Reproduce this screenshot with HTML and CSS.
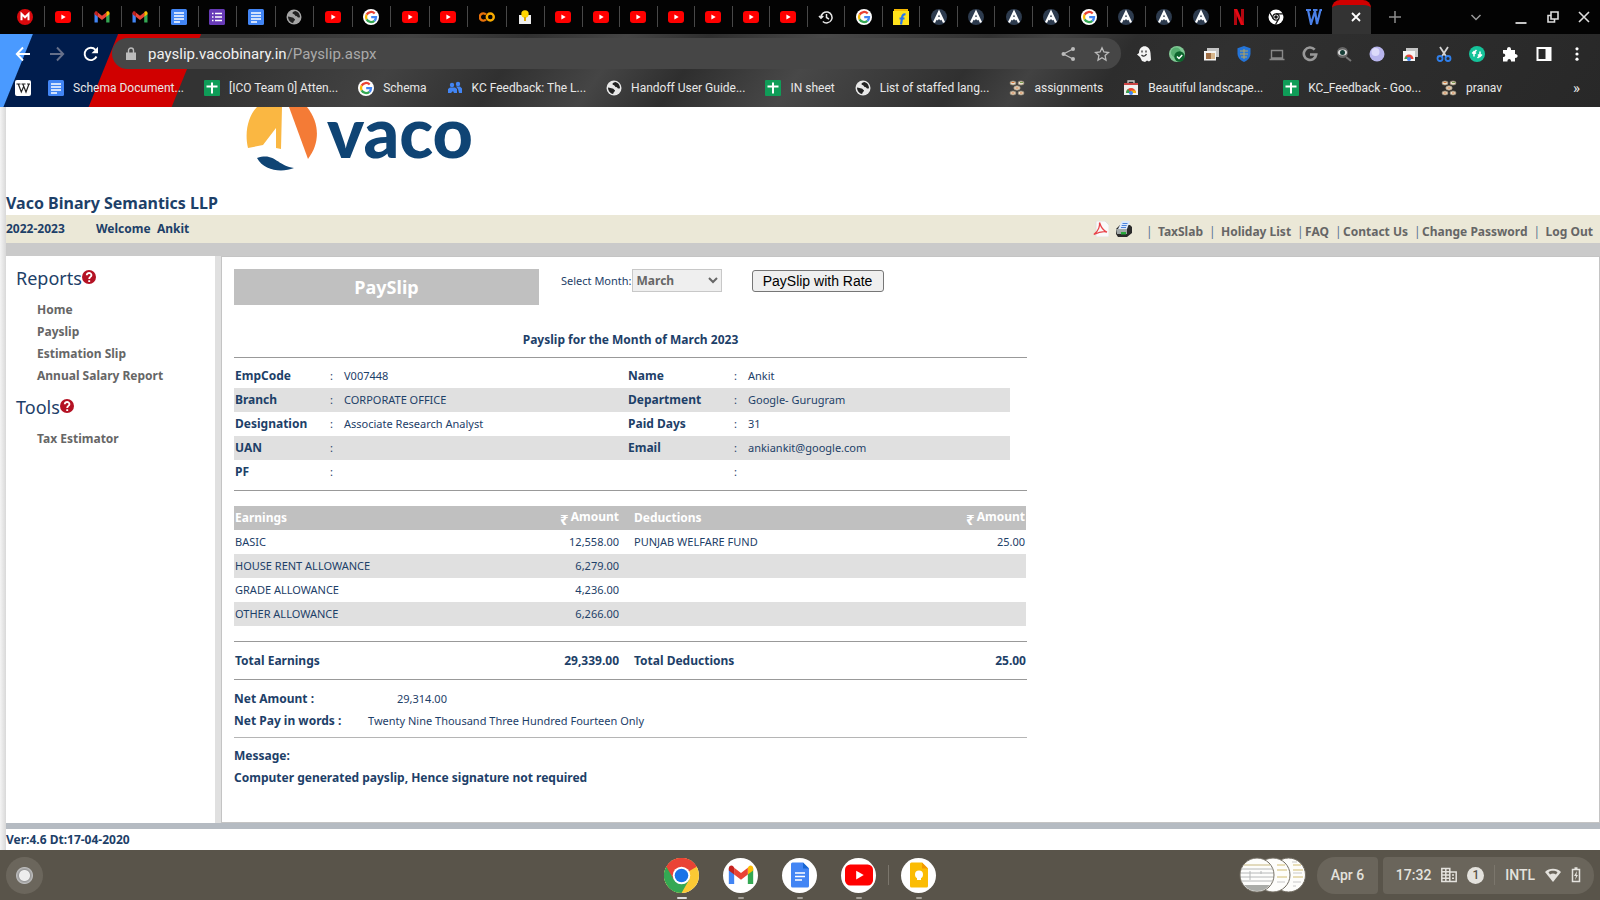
FILE: index.html
```html
<!DOCTYPE html>
<html lang="en">

<head>
    <meta charset="UTF-8">
    <meta name="viewport" content="width=device-width, initial-scale=1.0">
    <title>PaySlip</title>
    <link rel="stylesheet" href="styles.css">
</head>

<body>
    <!-- Shared icons -->
    <svg class="sprite" aria-hidden="true">
        <symbol id="mega" viewBox="0 0 16 16"><circle cx="8" cy="8" r="8" fill="#d9090d"/><path d="M4.500 11.300V4.800L8 8.300l3.500-3.500v6.500" fill="none" stroke="#fff" stroke-width="2"/></symbol>
        <symbol id="youtube" viewBox="0 0 16 16"><rect y="2" width="16" height="12" rx="3" fill="#f00"/><path d="M6.400 5.500v5L10.700 8z" fill="#fff"/></symbol>
        <symbol id="gmail" viewBox="0 0 16 16"><path d="M.5 4v9.500h3.300V6.500z" fill="#4285f4"/><path d="M15.500 4v9.500h-3.300V6.500z" fill="#34a853"/><path d="M12.200 3.500v4.200l3.300-2.500V3.800c0-1.500-1.700-2-2.700-1.200z" fill="#fbbc04"/><path d="M3.800 7.700V3.500L8 6.700l4.200-3.200v4.200L8 10.900z" fill="#ea4335"/><path d="M.5 5.200V3.800c0-1.500 1.700-2 2.700-1.200l.6.9v4.200z" fill="#c5221f"/></symbol>
        <symbol id="docs" viewBox="0 0 16 16"><rect width="16" height="16" rx="1.500" fill="#4285f4"/><path d="M3 4h10M3 7h10M3 10h10M3 13h6" stroke="#fff" stroke-width="1.500"/></symbol>
        <symbol id="forms" viewBox="0 0 16 16"><rect width="16" height="16" rx="1.500" fill="#673ab7"/><path d="M3 4.500h1.500M6 4.500h7M3 8h1.500M6 8h7M3 11.500h1.500M6 11.500h7" stroke="#fff" stroke-width="1.600"/></symbol>
        <symbol id="sheets" viewBox="0 0 16 16"><rect width="16" height="16" rx="1" fill="#0f9d58"/><path d="M8 2.500v11M2.500 6.500h11" stroke="#fff" stroke-width="2"/></symbol>
        <symbol id="globe" viewBox="0 0 16 16"><circle cx="8" cy="8" r="7.500" fill="currentColor"/><path d="M2 7.500c2 0 3 1 4.500 1s1 1.500 2.500 1.700c0 1.800-1.500 1.300-1.800 3.800C4 13.500 2 10.500 2 7.500M9 2c-1 1-2.500.6-2.500 2s2 .8 2.500 2.200 2 .6 2.300 1.600 1.600.6 2.700.4C14 5 12 2.500 9 2" fill="#222"/></symbol>
        <symbol id="google" viewBox="0 0 16 16"><circle cx="8" cy="8" r="8" fill="#fff"/><g fill="none" stroke-width="2.300"><path d="M3.600 5.600A5.100 5.100 0 0 1 11.700 4.500" stroke="#ea4335"/><path d="M3.600 5.600a5.100 5.100 0 0 0 0 4.800" stroke="#fbbc05"/><path d="M3.600 10.400a5.100 5.100 0 0 0 7.800 1.400" stroke="#34a853"/><path d="M11.400 11.800A5 5 0 0 0 13 8.200H8.200" stroke="#4285f4"/></g></symbol>
        <symbol id="colab" viewBox="0 0 16 16"><g fill="none" stroke-width="2.400"><path d="M7 5.500a3.600 3.600 0 1 0 0 5" stroke="#e8710a"/><circle cx="11.300" cy="8" r="3.500" stroke="#f9ab00"/></g></symbol>
        <symbol id="bulb" viewBox="0 0 16 16"><path d="M2 15V6h12v9z" fill="#eee"/><circle cx="8" cy="5" r="3.700" fill="#ffd500"/><path d="M7 8h2v4H7z" fill="#e0a800"/></symbol>
        <symbol id="history" viewBox="0 0 16 16"><path d="M3 8.500a5.500 5.500 0 1 1 1.800 4M1 7l2 2.200L5.300 7M8.500 5v3.500l2.500 1.600" fill="none" stroke="#e8e8e8" stroke-width="1.500"/></symbol>
        <symbol id="flipkart" viewBox="0 0 16 16"><path d="M1 0h14v3H1z" fill="#f5b800"/><path d="M0 2h16v14H0z" fill="#ffe11b"/><path d="M12.500 5.500c-2-.5-3 .5-3.300 2.500L8 15.500M6.500 9.500h5" fill="none" stroke="#2874f0" stroke-width="2.200"/></symbol>
        <symbol id="alpha" viewBox="0 0 16 16"><circle cx="8" cy="8" r="8" fill="#2d3b4e"/><path d="M3 13.500 8 3l5 10.500M5.500 10.500 8 8.800l2.500 1.700" fill="none" stroke="#fff" stroke-width="2.200"/></symbol>
        <symbol id="netflix" viewBox="0 0 16 16"><path d="M4.500 0v16M11.500 0v16" stroke="#b20710" stroke-width="3"/><path d="M3 0h3.200L13 16H9.800z" fill="#e50914"/></symbol>
        <symbol id="mono-chrome" viewBox="0 0 16 16"><circle cx="8" cy="8" r="7.500" fill="#fff"/><g fill="none" stroke="#111" stroke-width="1.200"><circle cx="8" cy="8" r="3.200"/><path d="M8 4.800h7M5.200 9.600 1.700 3.600M10.800 9.600 7.500 15.500"/></g><circle cx="8" cy="8" r="1.800" fill="#111"/></symbol>
        <symbol id="word" viewBox="0 0 16 16"><path d="M0 1h5M7 1h4.500M2 1l3 14L9 2l2 13 3.500-14H16" fill="none" stroke="#4a80e8" stroke-width="2.200"/></symbol>
        <symbol id="wiki" viewBox="0 0 16 16"><rect width="16" height="16" rx="2" fill="#fff"/><path d="M1.500 4h4M6.500 4h4M12 4h3M3.300 4l3 8L8.700 6.500M7.800 4l3.200 8 3-8" fill="none" stroke="#222" stroke-width="1.200"/></symbol>
        <symbol id="people" viewBox="0 0 16 16"><g fill="#4285f4"><circle cx="5" cy="5" r="2.200"/><circle cx="11" cy="4" r="2.200"/><path d="M1 13V9l2-1.500h5L10 9v4H7l-1-2-2 2zM9 6.500h4l2 2V13h-3l-1-4z"/></g></symbol>
        <symbol id="swarm" viewBox="0 0 16 16"><g fill="#e7dfcf" stroke="#96866e" stroke-width=".8"><ellipse cx="4" cy="3" rx="3" ry="2"/><ellipse cx="12" cy="3" rx="3" ry="2"/><ellipse cx="8" cy="8" rx="3.200" ry="2.200"/><ellipse cx="4" cy="13" rx="3" ry="2"/><ellipse cx="12" cy="13" rx="3" ry="2"/></g><path d="M2.500 2.500h3M6.500 8h3M2.500 13h3M11 13h2.500" stroke="#d87838"/><path d="M11 2.500h3" stroke="#7a9b4d"/></symbol>
        <symbol id="store" viewBox="0 0 16 16"><path d="M5 3V1h6v2" fill="none" stroke="#ccc" stroke-width="1.300"/><path d="M1 3h14v12H1z" fill="#f1f1f1"/><path d="M1 3h14v2H1z" fill="#c44"/><path d="M3 13a5 5 0 0 1 10 0z" fill="#ea4335"/><path d="M3 13a5 5 0 0 1 2-4l2.500 4z" fill="#34a853"/><path d="M8 13h5a5 5 0 0 0-.8-2.500H8z" fill="#fbbc05"/><circle cx="8" cy="13" r="2" fill="#4285f4"/></symbol>
        <symbol id="chrome" viewBox="0 0 36 36"><circle cx="18" cy="18" r="18" fill="#fbc934"/><path d="M18 18 2.400 9A18 18 0 0 1 33.600 9z" fill="#ea4335"/><path d="M18 18 2.400 9a18 18 0 0 0 15.600 27l8-14z" fill="#34a853"/><path d="M18 9h15.600A18 18 0 0 0 2.400 9l8 13.500z" fill="#ea4335"/><circle cx="18" cy="18" r="9" fill="#fff"/><circle cx="18" cy="18" r="7" fill="#1a73e8"/></symbol>
        <symbol id="help" viewBox="0 0 14 14"><circle cx="7" cy="7" r="7" fill="#b41224"/><path d="M4.800 5.200c0-3 4.700-2.800 4.600 0C9.400 7 7.200 6.800 7.200 9M7.200 10.200v1.800" fill="none" stroke="#fff" stroke-width="1.900"/></symbol>
    </svg>

    <header class="browser">
        <div class="tab-strip">
            <div class="tabs tabs-left">
                <button class="tab" aria-label="Mega"><svg><use href="#mega"/></svg></button>
                <button class="tab" aria-label="YouTube"><svg><use href="#youtube"/></svg></button>
                <button class="tab" aria-label="Gmail"><svg><use href="#gmail"/></svg></button>
                <button class="tab" aria-label="Gmail"><svg><use href="#gmail"/></svg></button>
                <button class="tab" aria-label="Docs"><svg><use href="#docs"/></svg></button>
                <button class="tab" aria-label="Forms"><svg><use href="#forms"/></svg></button>
                <button class="tab" aria-label="Docs"><svg><use href="#docs"/></svg></button>
                <button class="tab" aria-label="Site"><svg class="dim"><use href="#globe"/></svg></button>
                <button class="tab" aria-label="YouTube"><svg><use href="#youtube"/></svg></button>
                <button class="tab" aria-label="Google"><svg><use href="#google"/></svg></button>
                <button class="tab" aria-label="YouTube"><svg><use href="#youtube"/></svg></button>
                <button class="tab" aria-label="YouTube"><svg><use href="#youtube"/></svg></button>
                <button class="tab" aria-label="Colab"><svg><use href="#colab"/></svg></button>
                <button class="tab" aria-label="Ideas"><svg><use href="#bulb"/></svg></button>
            </div>
            <div class="tabs tabs-right">
                <button class="tab" aria-label="YouTube"><svg><use href="#youtube"/></svg></button>
                <button class="tab" aria-label="YouTube"><svg><use href="#youtube"/></svg></button>
                <button class="tab" aria-label="YouTube"><svg><use href="#youtube"/></svg></button>
                <button class="tab" aria-label="YouTube"><svg><use href="#youtube"/></svg></button>
                <button class="tab" aria-label="YouTube"><svg><use href="#youtube"/></svg></button>
                <button class="tab" aria-label="YouTube"><svg><use href="#youtube"/></svg></button>
                <button class="tab" aria-label="YouTube"><svg><use href="#youtube"/></svg></button>
                <button class="tab" aria-label="History"><svg><use href="#history"/></svg></button>
                <button class="tab" aria-label="Google"><svg><use href="#google"/></svg></button>
                <button class="tab" aria-label="Flipkart"><svg><use href="#flipkart"/></svg></button>
                <button class="tab" aria-label="Alpha"><svg><use href="#alpha"/></svg></button>
                <button class="tab" aria-label="Alpha"><svg><use href="#alpha"/></svg></button>
                <button class="tab" aria-label="Alpha"><svg><use href="#alpha"/></svg></button>
                <button class="tab" aria-label="Alpha"><svg><use href="#alpha"/></svg></button>
                <button class="tab" aria-label="Google"><svg><use href="#google"/></svg></button>
                <button class="tab" aria-label="Alpha"><svg><use href="#alpha"/></svg></button>
                <button class="tab" aria-label="Alpha"><svg><use href="#alpha"/></svg></button>
                <button class="tab" aria-label="Alpha"><svg><use href="#alpha"/></svg></button>
                <button class="tab" aria-label="Netflix"><svg><use href="#netflix"/></svg></button>
                <button class="tab" aria-label="Chrome"><svg><use href="#mono-chrome"/></svg></button>
                <button class="tab" aria-label="Word"><svg><use href="#word"/></svg></button>
            </div>
            <button class="tab-active" aria-label="Close tab"><svg viewBox="0 0 16 16"><path d="M4 4l8 8M12 4l-8 8" stroke="#fff" stroke-width="1.800"/></svg></button>
            <button class="new-tab" aria-label="New tab"><svg viewBox="0 0 16 16"><path d="M8 2v12M2 8h12" stroke="#8d8d8d" stroke-width="1.500"/></svg></button>
            <div class="window-buttons">
                <button aria-label="Search tabs"><svg viewBox="0 0 16 16"><path d="M3.500 6l4.500 4.500L12.500 6" fill="none" stroke="#999" stroke-width="1.500"/></svg></button>
                <button aria-label="Minimize"><svg viewBox="0 0 16 16"><path d="M2.500 14h11" stroke="#ddd" stroke-width="1.800"/></svg></button>
                <button aria-label="Restore"><svg viewBox="0 0 16 16"><path d="M6 3h7v7H6zM6 6.500H3V13h6.500v-3" fill="none" stroke="#ddd" stroke-width="1.600"/></svg></button>
                <button aria-label="Close"><svg viewBox="0 0 16 16"><path d="M3 3l10 10M13 3L3 13" stroke="#ddd" stroke-width="1.600"/></svg></button>
            </div>
        </div>

        <div class="theme">
            <div class="toolbar">
                <div class="nav-buttons">
                    <button aria-label="Back"><svg viewBox="0 0 16 16"><path d="M15 8H2M8 1.500L1.800 8 8 14.500" fill="none" stroke="#fff" stroke-width="1.900"/></svg></button>
                    <button aria-label="Forward"><svg viewBox="0 0 16 16"><path d="M1 8h13M8 1.500L14.200 8 8 14.500" fill="none" stroke="#66708a" stroke-width="1.900"/></svg></button>
                    <button aria-label="Reload"><svg viewBox="0 0 16 16"><path d="M13.500 10.500A6.200 6.200 0 1 1 12.500 3.800" fill="none" stroke="#fff" stroke-width="1.900"/><path d="M15 .8v6.500H8.500z" fill="#fff"/></svg></button>
                </div>
                <div class="omnibox">
                    <svg class="lock" viewBox="0 0 12 14"><path d="M1 5.500h10V13H1z" fill="#bbb"/><path d="M3.500 6V3.500a2.500 2.500 0 0 1 5 0V6" fill="none" stroke="#bbb" stroke-width="1.400"/></svg>
                    <a class="url" href="#">payslip.vacobinary.in<span>/Payslip.aspx</span></a>
                    <button aria-label="Share"><svg viewBox="0 0 16 16"><path d="M13 3L3.500 8l9.500 5" fill="none" stroke="#bbb" stroke-width="1.300"/><g fill="#bbb"><circle cx="13" cy="3" r="2"/><circle cx="3.500" cy="8" r="2"/><circle cx="13" cy="13" r="2"/></g></svg></button>
                    <button aria-label="Bookmark"><svg viewBox="0 0 16 16"><path d="M8 1.800l1.900 4.200 4.600.5-3.400 3.100.9 4.500L8 11.800l-4 2.300.9-4.500L1.500 6.500l4.600-.5z" fill="none" stroke="#bbb" stroke-width="1.300"/></svg></button>
                </div>
                <div class="extensions">
                    <button aria-label="Ghost"><svg viewBox="0 0 16 16"><path d="M1 8.500 3 7c0-9 11-9 11.500 0L15 14l-2 1.500-2-1-2 1.500-3-1-2-4z" fill="#f5f5f5"/><path d="M6 4.500v2M10 4.500v2M5.500 9c2 2 4 1 5-1" fill="none" stroke="#333" stroke-width="1.300"/></svg></button>
                    <button aria-label="Checker"><svg viewBox="0 0 16 16"><circle cx="8" cy="8" r="8" fill="#81c995"/><circle cx="7" cy="6.500" r="5" fill="#56ad70"/><circle cx="10.500" cy="10.500" r="5.200" fill="#0d652d"/><path d="M8 10.500l2 2 3.200-3.500" fill="none" stroke="#fff" stroke-width="1.500"/></svg></button>
                    <button aria-label="Windows"><svg viewBox="0 0 16 16"><path d="M4 2h12v9H4z" fill="#c4c4c4"/><path d="M1 5h12v9.500H1z" fill="#f5f5f5"/><path d="M3 7h5v6H3z" fill="#a16f45"/><path d="M8 7h4v6H8z" fill="#d7b68b"/></svg></button>
                    <button aria-label="Shield"><svg viewBox="0 0 16 16"><path d="M8 0l6.500 2.300v5c0 4-2.500 7-6.500 8.700-4-1.700-6.500-4.700-6.500-8.700v-5z" fill="#2474d8"/><path d="M4 5h8M4 8h8M5 11h6M8 3v10" stroke="#b6a45c"/></svg></button>
                    <button aria-label="Laptop"><svg viewBox="0 0 16 16"><path d="M2.500 4.500h11V12h-11zM.5 13.500h15" fill="none" stroke="#888" stroke-width="1.400"/></svg></button>
                    <button aria-label="G"><svg viewBox="0 0 16 16"><path d="M12.700 3.600A6.200 6.200 0 1 0 14.200 8.500H8" fill="none" stroke="#999" stroke-width="2.600"/></svg></button>
                    <button aria-label="Inspect"><svg viewBox="0 0 16 16"><path d="M10 11l5 4" stroke="#777" stroke-width="2"/><circle cx="6.500" cy="6.500" r="5.500" fill="#666"/><ellipse cx="6.500" cy="6.500" rx="4.500" ry="3" fill="#ddd"/><circle cx="6.500" cy="6.500" r="2.500" fill="#163e37"/></svg></button>
                    <button aria-label="Orb"><svg viewBox="0 0 16 16"><circle cx="8" cy="8" r="7.500" fill="#b8b5ed"/><circle cx="6.500" cy="6" r="4" fill="#dcdafa"/></svg></button>
                    <button aria-label="Web store"><svg viewBox="0 0 16 16"><path d="M4 2h12v9H4z" fill="#c4c4c4"/><path d="M1 5h12v10H1z" fill="#f5f5f5"/><path d="M2.500 13a4.500 4.500 0 0 1 9 0z" fill="#ea4335"/><path d="M2.500 13a4.500 4.500 0 0 1 2-3l2 3z" fill="#34a853"/><circle cx="7" cy="13" r="2" fill="#4285f4"/></svg></button>
                    <button aria-label="Clip"><svg viewBox="0 0 16 16"><path d="M4 1l6.500 10M12 1L5.500 11" stroke="#d5d5d5" stroke-width="1.800"/><g fill="none" stroke="#2f80ed" stroke-width="1.800"><circle cx="4" cy="12.500" r="2.500"/><circle cx="12" cy="12.500" r="2.500"/></g></svg></button>
                    <button aria-label="Sync"><svg viewBox="0 0 16 16"><circle cx="8" cy="8" r="8" fill="#15c39a"/><path d="M5 10.500V6.500L7.500 4M11 5.500v4L8.500 12M3.200 7.500 5 5.500l2 2M13 8.500l-2 2-2-2" fill="none" stroke="#fff" stroke-width="1.500"/></svg></button>
                    <button aria-label="Extensions"><svg viewBox="0 0 16 16"><path d="M1 4h4c-.5-4 4.500-4 4 0h4v4c3.500 0 3.500 4 0 4v3.500H9c.5-3.500-4-3.500-3.500 0H1V11c3 .5 3-3.800 0-3.500z" fill="#fff"/></svg></button>
                    <button aria-label="Side panel"><svg viewBox="0 0 16 16"><path d="M1.500 2h13v12h-13z" fill="none" stroke="#fff" stroke-width="2"/><path d="M9.500 2h5v12h-5z" fill="#fff"/></svg></button>
                    <button aria-label="Menu"><svg viewBox="0 0 16 16"><g fill="#fff"><circle cx="8" cy="2.800" r="1.600"/><circle cx="8" cy="8" r="1.600"/><circle cx="8" cy="13.200" r="1.600"/></g></svg></button>
                </div>
            </div>

            <nav class="bookmarks">
                <a class="icon-only" href="#" aria-label="Wikipedia"><svg><use href="#wiki"/></svg></a>
                <a href="#"><svg><use href="#docs"/></svg>Schema Document...</a>
                <a href="#"><svg><use href="#sheets"/></svg>[ICO Team 0] Atten...</a>
                <a href="#"><svg><use href="#google"/></svg>Schema</a>
                <a href="#"><svg><use href="#people"/></svg>KC Feedback: The L...</a>
                <a href="#"><svg><use href="#globe"/></svg>Handoff User Guide...</a>
                <a href="#"><svg><use href="#sheets"/></svg>IN sheet</a>
                <a href="#"><svg><use href="#globe"/></svg>List of staffed lang...</a>
                <a href="#"><svg><use href="#swarm"/></svg>assignments</a>
                <a href="#"><svg><use href="#store"/></svg>Beautiful landscape...</a>
                <a href="#"><svg><use href="#sheets"/></svg>KC_Feedback - Goo...</a>
                <a href="#"><svg><use href="#swarm"/></svg>pranav</a>
                <button class="more">»</button>
            </nav>
        </div>
    </header>

    <div class="page">
        <div class="banner">
            <div class="logo">
                <svg class="logo-mark" viewBox="0 0 72 64">
                    <path d="M11 0h25l-1 42-5-1V21L17 38 2 41C-2 24 3 8 11 0z" fill="#fab742"/>
                    <path d="M43 0h18c12 15 14 35 1 52z" fill="#f47b36"/>
                    <path d="M11 51c18-6 20 8 37 10-12 5-30 3-37-10z" fill="#0f4474"/>
                </svg>
                <span>vaco</span>
            </div>
            <h1>Vaco Binary Semantics LLP</h1>
        </div>

        <div class="info-bar">
            <span class="year">2022-2023</span>
            <span>Welcome&nbsp; Ankit</span>
            <nav class="top-links">
                <div class="exports">
                    <button aria-label="Export PDF"><svg viewBox="0 0 16 16"><path d="M3 0h9l4 4v12H3z" fill="#fafafa" stroke="#ddd" stroke-width=".8"/><path d="M.8 13.500C6 10 7 4 6.500 1.500c2 6 4 8.500 7.500 9.500-4-1-8 0-13.200 2.500z" fill="none" stroke="#e8444a" stroke-width="1.300"/></svg></button>
                    <button aria-label="Print"><svg viewBox="0 0 16 16"><path d="M0 8l4-4h10l2 2v6l-5 4H2l-2-3z" fill="#2b2b2b"/><path d="M0 8h11v5H1z" fill="#a3a9a9"/><path d="M6 0h8l-3 8H2z" fill="#dce8fb"/><path d="M6.500 2.500h5M5.700 4.500h5M5 6.500h5" stroke="#4b83dc" stroke-width="1.200"/><path d="M5 11h5v2.500H5z" fill="#28a93b"/></svg></button>
                </div>
                <span class="bar">|</span><a class="wide" href="#">TaxSlab</a>
                <span class="bar">|</span><a class="wide" href="#">Holiday List</a>
                <span class="bar">|</span><a href="#">FAQ</a>
                <span class="bar">|</span><a href="#">Contact Us</a>
                <span class="bar">|</span><a href="#">Change Password</a>
                <span class="bar">|</span><a class="wide" href="#">Log Out</a>
            </nav>
        </div>

        <div class="main">
            <aside class="sidebar">
                <h2>Reports<svg><use href="#help"/></svg></h2>
                <ul>
                    <li><a href="#">Home</a></li>
                    <li><a href="#">Payslip</a></li>
                    <li><a href="#">Estimation Slip</a></li>
                    <li><a href="#">Annual Salary Report</a></li>
                </ul>
                <h2>Tools<svg><use href="#help"/></svg></h2>
                <ul>
                    <li><a href="#">Tax Estimator</a></li>
                </ul>
            </aside>

            <section class="content">
                <div class="controls">
                    <h2>PaySlip</h2>
                    <label for="month">Select Month:</label>
                    <select id="month" disabled>
                        <option>March</option>
                    </select>
                    <button>PaySlip with Rate</button>
                </div>

                <h3>Payslip for the Month of March 2023</h3>

                <table class="employee">
                    <tr><th>EmpCode</th><td>:</td><td>V007448</td><th>Name</th><td>:</td><td>Ankit</td></tr>
                    <tr><th>Branch</th><td>:</td><td>CORPORATE OFFICE</td><th>Department</th><td>:</td><td>Google- Gurugram</td></tr>
                    <tr><th>Designation</th><td>:</td><td>Associate Research Analyst</td><th>Paid Days</th><td>:</td><td>31</td></tr>
                    <tr><th>UAN</th><td>:</td><td></td><th>Email</th><td>:</td><td>ankiankit@google.com</td></tr>
                    <tr><th>PF</th><td>:</td><td></td><th></th><td>:</td><td></td></tr>
                </table>

                <hr>

                <table class="salary">
                    <thead>
                        <tr><th>Earnings</th><th><span class="rupee">₹</span>Amount</th><th>Deductions</th><th><span class="rupee">₹</span>Amount</th></tr>
                    </thead>
                    <tbody>
                        <tr><td>BASIC</td><td>12,558.00</td><td>PUNJAB WELFARE FUND</td><td>25.00</td></tr>
                        <tr><td>HOUSE RENT ALLOWANCE</td><td>6,279.00</td><td></td><td></td></tr>
                        <tr><td>GRADE ALLOWANCE</td><td>4,236.00</td><td></td><td></td></tr>
                        <tr><td>OTHER ALLOWANCE</td><td>6,266.00</td><td></td><td></td></tr>
                    </tbody>
                </table>

                <table class="salary totals">
                    <tr><th>Total Earnings</th><th>29,339.00</th><th>Total Deductions</th><th>25.00</th></tr>
                </table>

                <dl class="net">
                    <dt>Net Amount :</dt><dd class="amount">29,314.00</dd>
                    <dt>Net Pay in words :</dt><dd>Twenty Nine Thousand Three Hundred Fourteen Only</dd>
                </dl>

                <div class="message">
                    <p>Message:</p>
                    <p>Computer generated payslip, Hence signature not required</p>
                </div>
            </section>
        </div>

        <footer>Ver:4.6 Dt:17-04-2020</footer>
    </div>

    <div class="shelf">
        <button class="launcher" aria-label="Launcher"></button>
        <div class="apps">
            <button class="app current" aria-label="Chrome"><svg class="full"><use href="#chrome"/></svg></button>
            <button class="app" aria-label="Gmail"><svg><use href="#gmail"/></svg></button>
            <button class="app" aria-label="Docs"><svg viewBox="0 0 26 26"><path d="M4 2a1.500 1.500 0 0 1 1.500-1.500H16l6 6V24a1.500 1.500 0 0 1-1.500 1.500h-15A1.500 1.500 0 0 1 4 24z" fill="#4285f4"/><path d="M16 .5l6 6h-6z" fill="#1967d2"/><path d="M8 11h10M8 14.500h10M8 18h7" stroke="#fff" stroke-width="1.400"/></svg></button>
            <button class="app" aria-label="YouTube"><svg class="large"><use href="#youtube"/></svg></button>
            <span class="divider"></span>
            <button class="app" aria-label="Keep"><svg viewBox="0 0 26 26"><path d="M4 2a1.500 1.500 0 0 1 1.500-1.500H16l6 6V24a1.500 1.500 0 0 1-1.500 1.500h-15A1.500 1.500 0 0 1 4 24z" fill="#fbbc04"/><path d="M16 .5l6 6h-6z" fill="#f29900"/><circle cx="13" cy="12.500" r="4" fill="#fff"/><path d="M11 15h4v3h-4z" fill="#fff"/></svg></button>
        </div>
        <div class="status">
            <svg class="tote" viewBox="0 0 68 36"><g fill="#fdfdfb" stroke="#716c61"><circle cx="49.500" cy="18" r="17"/><circle cx="34" cy="18" r="17"/><circle cx="18" cy="18" r="17"/></g><path d="M38 8h8M54 8h8M38 13h10M54 13h10M54 20h10M38 20h10" stroke="#d2bd73"/><path d="M53 5h5M54 16h9M54 25h8M54 29h3M38 25h8" stroke="#c9c9c9"/><path d="M5 8h26" stroke="#c7b77e"/><path d="M2 12h31M2 16h32M2 20h32M3 24h30M11 14v9M22 14v3" stroke="#b6b8b8"/><path d="M5 28a17 17 0 0 0 26 0z" fill="#aaaca8"/></svg>
            <button class="pill date">Apr 6</button>
            <button class="pill tray">
                <span>17:32</span>
                <svg class="building" viewBox="0 0 16 16"><path d="M.8 1.500h8v13h-8zM8.800 5h6.400v9.500H8.800zM.8 4.700h8M.8 8h8M.8 11.200h8M4.800 1.500v13M11 8h2M11 11.200h2" fill="none" stroke="#e4e2dd" stroke-width="1.500"/></svg>
                <span class="count">1</span>
                <span class="divider"></span>
                <span>INTL</span>
                <svg class="wifi" viewBox="0 0 16 16"><path d="M0 5C4 .8 12 .8 16 5L8 15z" fill="#e4e2dd"/><path d="M3.500 5.200c2.500-1.800 6.500-1.800 9 0L11 7.500c-2-1.300-4-1.300-6 0z" fill="#6a655b"/></svg>
                <svg class="battery" viewBox="0 0 10 16"><path d="M1.500 2.500h7v12h-7zM3.500 1h3" fill="none" stroke="#e4e2dd" stroke-width="1.500"/><path d="M6 4L3 9h2l-1 4 3-5H5.500z" fill="#e4e2dd"/></svg>
            </button>
        </div>
    </div>
</body>

</html>
```

FILE: styles.css
```css
* {
    box-sizing: border-box;
}

body {
    margin: 0;
    height: 100vh;
    display: flex;
    flex-direction: column;
    overflow: hidden;
    background-color: #fff;
    color: #1d4068;
    font-family: "Noto Sans", sans-serif;
    font-size: 12px;
}

a {
    color: inherit;
    text-decoration: none;
}

h1,
h2,
h3,
p,
ul,
dl,
dd {
    margin: 0;
    padding: 0;
}

.sprite {
    display: none;
}

/* Browser frame */
.browser,
.shelf {
    font-family: Roboto, sans-serif;
    flex: none;
}

.browser button,
.exports button,
.shelf button {
    display: flex;
    align-items: center;
    justify-content: center;
    padding: 0;
    border: none;
    background: none;
    color: inherit;
    font: inherit;
}

.browser svg {
    width: 16px;
    height: 16px;
    flex: none;
}

.tab-strip {
    display: flex;
    height: 34px;
    padding-left: 6px;
    background-color: #030303;
}

.tabs {
    display: flex;
}

.tabs-left {
    width: 539px;
}

.tabs-right {
    width: 787px;
}

.tabs .tab {
    flex: 1;
    margin: 6px 0 7px;
    border-right: 1px solid #484848;
}

.tabs-right .tab:last-child {
    border-right: none;
}

.dim {
    color: #a5a5a5;
}

.browser .tab-active {
    width: 39px;
    padding: 0 0 5px 8px;
    border-top: 5px solid #d00000;
    border-radius: 8px 8px 0 0;
    background-color: #333;
}

.browser .new-tab {
    width: 48px;
}

.window-buttons {
    display: flex;
    justify-content: space-between;
    align-items: center;
    width: 124px;
    margin-left: auto;
    margin-right: 8px;
}

.window-buttons button:first-child {
    margin-right: 14px;
}

.theme {
    height: 73px;
    padding-top: 4px;
    color: #e8e8e8;
    background:
        linear-gradient(112deg, #4a9aff 30px, #001c4c 31px, #001c4c 109px, #d00000 110px, #d00000 186px, transparent 187px) 0 0 / 240px 73px no-repeat,
        linear-gradient(125deg, #333 15%, #424242 25%, #303030 32%, #454545 38%, #2e2e2e 43%, #484848 50%, #303030 60%, #424242 64%, #2d2d2d 69%, #303030 75%, #282828);
}

.toolbar {
    display: flex;
    align-items: center;
    height: 31px;
    padding: 0 15px;
}

.nav-buttons {
    display: flex;
    gap: 18px;
    width: 97px;
}

.omnibox {
    display: flex;
    align-items: center;
    flex: 1;
    gap: 18px;
    height: 31px;
    padding: 0 11px 0 13px;
    border-radius: 16px;
    background-color: #464646;
}

.omnibox .lock {
    width: 12px;
    height: 14px;
}

.url {
    flex: 1;
    margin-left: -7px;
    color: #f1f1f1;
    font-size: 15px;
}

.url span {
    color: #aaa;
}

.extensions {
    display: flex;
    justify-content: space-between;
    width: 449px;
    margin-left: 15px;
}

.bookmarks {
    display: flex;
    align-items: center;
    gap: 20px;
    height: 37px;
    padding: 0 20px 0 15px;
    font-size: 12px;
    white-space: nowrap;
}

.bookmarks a {
    display: flex;
    align-items: center;
    gap: 9px;
}

.bookmarks .icon-only {
    margin-right: -3px;
}

.bookmarks .more {
    margin-left: auto;
    font-size: 15px;
}

/* Payslip site */
.page {
    flex: 1;
    display: flex;
    flex-direction: column;
    padding-left: 6px;
    background: linear-gradient(to right, #f4f4f4, #d8d8d8 6px, #fff 6px);
    line-height: 16px;
}

.banner {
    display: flex;
    flex-direction: column;
    justify-content: space-between;
    height: 108px;
}

.banner h1 {
    font-size: 16px;
    line-height: 24px;
}

.logo {
    display: flex;
    gap: 9px;
    height: 64px;
    margin-left: 240px;
    color: #0f4474;
    font-family: Lato, sans-serif;
    font-size: 70px;
    font-weight: 900;
    line-height: 48px;
}

.logo-mark {
    width: 72px;
    height: 64px;
}

.info-bar {
    display: flex;
    align-items: center;
    height: 28px;
    padding-right: 7px;
    background-color: #ebe8d7;
    font-weight: bold;
}

.year {
    width: 90px;
}

.top-links {
    display: flex;
    align-items: center;
    margin-left: auto;
    padding-top: 6px;
    color: #666;
}

.top-links a {
    margin: 0 6px 0 4px;
}

.top-links .wide {
    margin-left: 8px;
}

.top-links .wide:last-child {
    margin-right: 0;
}

.top-links .bar {
    width: 4px;
    color: #5a7590;
    font-weight: normal;
}

.exports {
    display: flex;
    gap: 7px;
    margin-right: 14px;
    padding-bottom: 6px;
}

.exports svg {
    width: 16px;
    height: 16px;
}

.main {
    flex: 1;
    display: flex;
    border-top: 13px solid #cacaca;
    border-bottom: 6px solid #b5bbc2;
}

.sidebar {
    width: 215px;
    padding: 10px;
    border-right: 6px solid #e0e0e0;
}

.sidebar h2 {
    display: flex;
    font-size: 18px;
    font-weight: normal;
    line-height: 24px;
}

.sidebar h2 svg {
    width: 14px;
    height: 14px;
    margin-top: 4px;
}

.sidebar ul {
    padding: 9px 0 8px 21px;
    color: #666;
    font-weight: bold;
    line-height: 22px;
    list-style: none;
}

.content {
    flex: 1;
    padding: 12px;
    border: 1px solid #c4c4c4;
}

.controls {
    display: flex;
    align-items: flex-start;
    height: 36px;
}

.controls h2 {
    width: 305px;
    margin-right: 22px;
    background-color: #c0c0c0;
    color: #fff;
    font-size: 18px;
    line-height: 36px;
    text-align: center;
}

.controls label {
    font-size: 11px;
    line-height: 24px;
}

.controls select {
    width: 90px;
    height: 23px;
    padding: 0;
    border: 1px solid #c8c8c8;
    background-color: #efefef;
    color: #666;
    font: bold 12px "Noto Sans", sans-serif;
    opacity: 1;
}

.controls button {
    width: 132px;
    height: 22px;
    margin: 1px 0 0 30px;
    padding: 0;
    border: 1px solid #767676;
    border-radius: 3px;
    background-color: #efefef;
    color: #000;
    font: 14px "Liberation Sans", Arial, sans-serif;
}

.content h3 {
    width: 793px;
    padding: 27px 0 9px;
    border-bottom: 1px solid #999;
    font-size: 12px;
    text-align: center;
}

.content hr {
    width: 793px;
    margin: 0 0 15px;
    border: none;
    border-top: 1px solid #999;
}

table {
    border-collapse: collapse;
    table-layout: fixed;
}

th,
td {
    height: 24px;
    padding: 0 1px;
    text-align: left;
}

td,
.net dd {
    font-size: 11px;
}

tr:nth-child(even) {
    background-color: #e0e0e0;
}

.employee {
    width: 776px;
    margin: 6px 0;
}

.employee th {
    width: 106px;
}

.employee th:first-child {
    width: 95px;
}

.employee td:nth-child(2),
.employee td:nth-child(5) {
    width: 14px;
}

.employee td:nth-child(3) {
    width: 284px;
}

.salary {
    width: 792px;
}

.salary thead tr {
    background-color: #c0c0c0;
    color: #fff;
}

.salary th:nth-child(even),
.salary td:nth-child(even) {
    text-align: right;
}

.salary th:nth-child(1) {
    width: 240px;
}

.salary th:nth-child(2) {
    width: 146px;
}

.salary th:nth-child(3) {
    width: 240px;
    padding-left: 14px;
}

.salary td:nth-child(3) {
    padding-left: 14px;
}

.rupee {
    display: inline-block;
    margin-right: 2px;
    font-size: 15px;
    vertical-align: -4px;
}

.totals {
    width: 793px;
    margin: 15px 0 0;
    border-top: 1px solid #999;
    border-bottom: 1px solid #999;
}

.totals th {
    height: 38px;
}

.net {
    display: grid;
    grid-template-columns: 134px 1fr;
    width: 793px;
    padding: 8px 0 5px;
    border-bottom: 1px solid #b5b5b5;
    line-height: 22px;
}

.net dt,
.message {
    font-weight: bold;
}

.net .amount {
    padding-left: 29px;
}

.message {
    padding-top: 7px;
    line-height: 22px;
}

footer {
    height: 21px;
    font-weight: bold;
    line-height: 21px;
}

/* Shelf */
.shelf {
    display: grid;
    grid-template-columns: 1fr auto 1fr;
    align-items: center;
    height: 50px;
    padding: 0 6px;
    background-color: #59544a;
    color: #e4e2dd;
    font-size: 14px;
    font-weight: 500;
}

.shelf .launcher {
    width: 37px;
    height: 37px;
    border-radius: 50%;
    background: radial-gradient(circle, #ededed 5px, #999 6px, #bbb 8px, #6b665c 9px);
}

.apps {
    display: flex;
    align-items: center;
    gap: 24px;
}

.shelf .app {
    width: 35px;
    height: 35px;
    border-radius: 50%;
    background-color: #fff;
    position: relative;
}

.app svg {
    width: 26px;
    height: 26px;
}

.app .full {
    width: 35px;
    height: 35px;
}

.app .large {
    width: 28px;
    height: 28px;
}

/* running indicator */
.app::after {
    content: "";
    position: absolute;
    bottom: -6px;
    width: 6px;
    height: 2px;
    border-radius: 1px;
    background-color: #a19d95;
}

.app.current::after {
    width: 10px;
    background-color: #ddd;
}

.shelf .divider {
    width: 1px;
    height: 20px;
    background-color: #7b766c;
}

.apps .divider {
    margin: 0 -12px;
}

.status {
    display: flex;
    justify-content: flex-end;
    align-items: center;
}

.tote {
    width: 68px;
    height: 36px;
    margin-right: 10px;
}

.shelf .pill {
    height: 37px;
    background-color: #6a655b;
}

.shelf .date {
    width: 61px;
    margin-right: 5px;
    border-radius: 18px 4px 4px 18px;
}

.shelf .tray {
    width: 211px;
    gap: 10px;
    border-radius: 4px 18px 18px 4px;
}

.building,
.wifi {
    width: 16px;
    height: 16px;
}

.battery {
    width: 10px;
    height: 16px;
}

.count {
    width: 17px;
    height: 17px;
    border-radius: 50%;
    background-color: #e4e2dd;
    color: #59544a;
    font-size: 12px;
    line-height: 17px;
}
```
